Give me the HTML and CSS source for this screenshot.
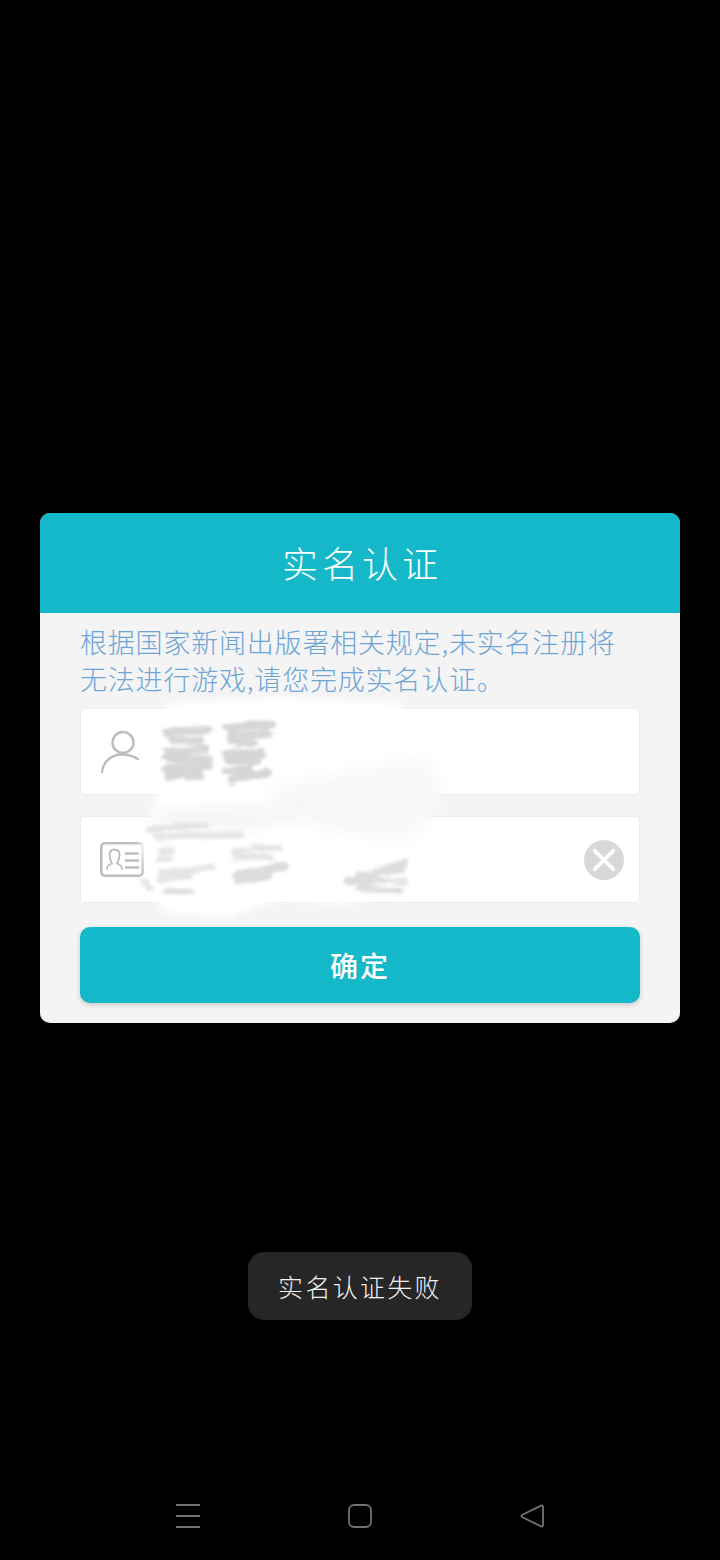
FILE: index.html
```html
<!DOCTYPE html>
<html lang="zh-CN">
<head>
<meta charset="utf-8">
<title>实名认证</title>
<link rel="stylesheet" href="styles.css">
</head>
<body>
<main class="screen">
  <section class="dialog">
    <header class="dialog-head"><h1 class="dialog-title">实名认证</h1></header>
    <div class="dialog-body">
      <p class="notice">根据国家新闻出版署相关规定,未实名注册将<br>无法进行游戏,请您完成实名认证。</p>
      <div class="field">
        <svg class="field-icon" viewBox="0 0 44 44" fill="none" stroke="#bdbdbd" stroke-width="2.400" stroke-linecap="round">
          <circle cx="23" cy="12.500" r="10.500"/>
          <path d="M2 42C3 32 11 24.500 22 24.500C28 24.500 33 26 38 29"/>
        </svg>
      </div>
      <div class="field field-id">
        <svg class="field-icon" viewBox="0 0 44 36" fill="none" stroke="#bdbdbd" stroke-linecap="round">
          <rect x="1.300" y="1.300" width="41.400" height="32.400" rx="3.500" stroke-width="2.600"/>
          <path stroke-width="1.800" d="M7 27C7 23 10 22.500 12 21.500C11 19 9.500 17.500 9.500 13C9.500 9.500 11.500 7.500 14.500 7.500C17.500 7.500 19.500 9.500 19.500 13C19.500 17.500 18 19 17 21.500C19 22.500 22 23 22 27"/>
          <path stroke-width="2.400" d="M26 11.500H38M26 18.500H38M26 25.500H38"/>
        </svg>
        <svg class="clear-icon" viewBox="0 0 40 40">
          <circle cx="20" cy="20" r="20" fill="#d8d8d8"/>
          <path d="M10.500 10.500L29.500 29.500M29.500 10.500L10.500 29.500" stroke="#fff" stroke-width="3.600" stroke-linecap="round"/>
        </svg>
      </div>
      <button class="confirm" type="button">确定</button>
    </div>
    <svg class="scribble" viewBox="0 0 640 510" aria-hidden="true">
      <defs>
        <filter id="soft" x="-20%" y="-20%" width="140%" height="140%"><feGaussianBlur stdDeviation="3"/></filter>
        <filter id="softer" x="-30%" y="-30%" width="160%" height="160%"><feGaussianBlur stdDeviation="8"/></filter>
        <filter id="streak" x="-20%" y="-20%" width="140%" height="140%">
          <feTurbulence type="fractalNoise" baseFrequency="0.03 0.35" numOctaves="2" seed="4" result="noise"/>
          <feDisplacementMap in="SourceGraphic" in2="noise" scale="9" xChannelSelector="R" yChannelSelector="G"/>
          <feGaussianBlur stdDeviation="1.500"/>
        </filter>
      </defs>
      <path filter="url(#soft)" fill="#fff" d="M128 190L240 184L362 190L372 240L385 262L400 285L372 320L372 350L360 378L300 392L240 385L190 405L125 400L108 370L100 330L118 280L108 240Z"/>
      <path filter="url(#softer)" fill="#f7f7f7" d="M230 275L385 245L405 285L370 325L300 320L240 300Z"/>
      <path filter="url(#softer)" fill="#f4f4f4" d="M110 298L220 292L280 300L200 318L112 312Z"/>
      <g filter="url(#streak)" fill="none" stroke-linecap="round">
        <g stroke="#cfcfcf" stroke-width="8" opacity="0.85">
          <path d="M128 219L168 217M132 227L160 228M128 238L166 236M125 245L170 247M126 256L168 254M128 263L160 263"/>
          <path d="M186 214L232 211M190 222L228 220M192 230L214 229M186 241L222 240M188 248L218 246M186 258L210 256M192 266L228 260"/>
        </g>
        <g stroke="#e2e2e2" stroke-width="7" opacity="0.85">
          <path d="M110 316L165 312M116 324L200 322"/>
          <path d="M122 338L132 338M120 346L130 346"/>
          <path d="M122 360L172 354M120 366L150 364"/>
          <path d="M104 368L110 376"/>
          <path d="M194 338L240 335M196 345L230 344"/>
        </g>
        <g stroke="#d6d6d6" stroke-width="7" opacity="0.85">
          <path d="M196 362L245 353M198 368L230 362"/>
          <path d="M336 358L364 350M318 362L362 358M308 368L365 368M320 375L360 378"/>
          <path d="M128 378L150 378"/>
        </g>
      </g>
    </svg>
  </section>
  <div class="toast">实名认证失败</div>
  <nav class="nav-bar">
    <svg class="nav-icon" viewBox="0 0 24 24" stroke="#737373" stroke-width="1.800"><path d="M0 1H24M0 12H24M0 23H24"/></svg>
    <svg class="nav-icon" viewBox="0 0 24 24" fill="none" stroke="#737373" stroke-width="1.800"><rect x="1" y="1" width="22" height="22" rx="5"/></svg>
    <svg class="nav-icon" viewBox="0 0 24 24" fill="none" stroke="#737373" stroke-width="1.800" stroke-linejoin="round"><path d="M21 1.600Q23 1 23 3V21Q23 23 21 22.400L2.500 13.200Q0.500 12 2.500 10.800Z"/></svg>
  </nav>
</main>
</body>
</html>
```
FILE: styles.css
```css
* { box-sizing: border-box; }
html, body { margin: 0; background: #000; }
body { font-family: "Noto Sans CJK SC", "Noto Sans", sans-serif; font-weight: 300; }

.screen {
  display: flex;
  flex-direction: column;
  align-items: center;
  height: 1560px;
  padding-top: 513px;
  overflow: hidden;
}

.dialog {
  position: relative;
  width: 640px;
  height: 510px;
  border-radius: 10px;
  overflow: hidden;
  background: #f4f4f4;
}
.dialog-head {
  display: flex;
  align-items: center;
  justify-content: center;
  height: 100px;
  padding-bottom: 2px;
  background: #14b8c8;
}
.dialog-title {
  margin: 0;
  color: #fff;
  font-size: 36px;
  font-weight: 300;
  letter-spacing: 4px;
  line-height: 1;
  padding-left: 4px;
}
.dialog-body {
  display: flex;
  flex-direction: column;
  padding: 10px 40px 20px;
}
.notice {
  margin: 0 0 11px;
  color: #6ea5d6;
  font-size: 27px;
  letter-spacing: 0.800px;
  line-height: 37px;
  white-space: nowrap;
}
.field {
  display: flex;
  align-items: center;
  justify-content: space-between;
  height: 87px;
  padding: 0 15px 0 19px;
  background: #fff;
  border: 1px solid #ececec;
  border-radius: 5px;
}
.field-id { margin-top: 21px; }
.field-icon { display: block; width: 44px; height: 44px; }
.field-id .field-icon { height: 36px; }
.clear-icon { display: block; width: 40px; height: 40px; }

.confirm {
  margin-top: 24px;
  height: 76px;
  padding: 0;
  border: 0;
  border-radius: 10px;
  background: #14b8c8;
  color: #fff;
  font-family: inherit;
  font-size: 28px;
  font-weight: 500;
  letter-spacing: 2px;
  box-shadow: 0 2px 5px rgba(0, 0, 0, 0.18);
}

.scribble {
  position: absolute;
  left: 0;
  top: 0;
  width: 640px;
  height: 510px;
  pointer-events: none;
}

.toast {
  display: flex;
  align-items: center;
  justify-content: center;
  width: 224px;
  height: 68px;
  margin-top: 229px;
  border-radius: 16px;
  background: #262626;
  color: #f0f0f0;
  font-size: 25px;
  letter-spacing: 2.300px;
}

.nav-bar {
  display: flex;
  gap: 148px;
  margin-top: 184px;
}
.nav-icon { display: block; width: 24px; height: 24px; }
```
